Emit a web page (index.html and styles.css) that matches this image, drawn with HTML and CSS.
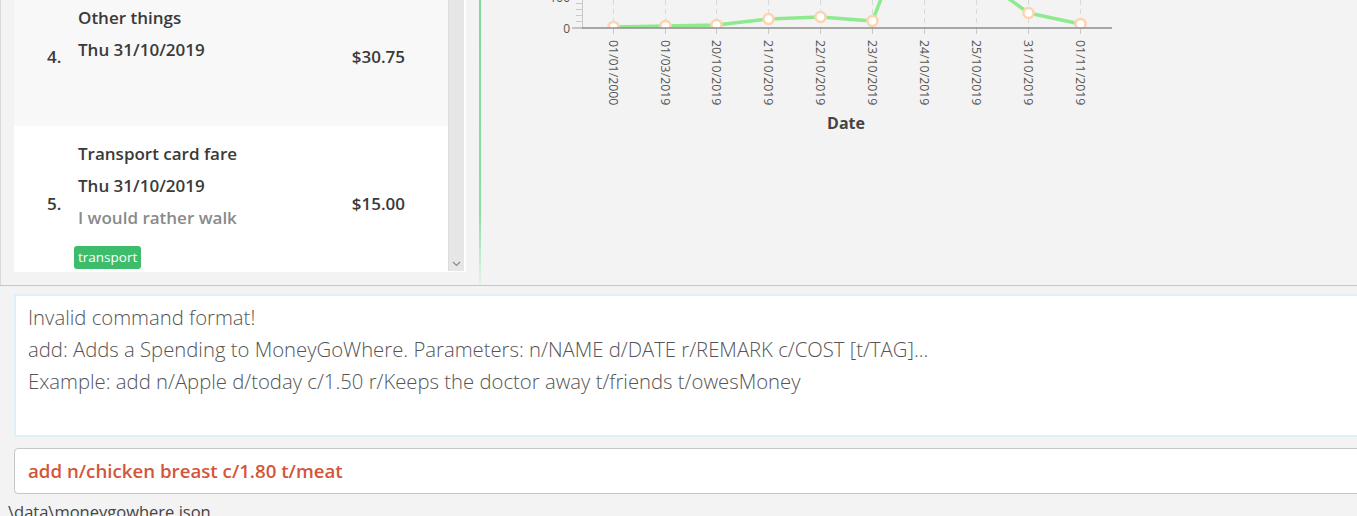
FILE: index.html
```html
<!DOCTYPE html>
<html>
<head>
<meta charset="utf-8">
<link rel="stylesheet" href="styles.css">
</head>
<body>
<div class="app">
  <div class="top">
    <div class="list-panel">
      <div class="list-view">
        <div class="list-cells">
          <div class="cell cell-alt cell-first">
            <div class="cell-index">4.</div>
            <div class="cell-body">
              <div class="cell-line">Other things</div>
              <div class="cell-line">Thu 31/10/2019</div>
            </div>
            <div class="cell-cost">$30.75</div>
          </div>
          <div class="cell cell-tall">
            <div class="cell-index">5.</div>
            <div class="cell-body">
              <div class="cell-line">Transport card fare</div>
              <div class="cell-line">Thu 31/10/2019</div>
              <div class="cell-line cell-remark">I would rather walk</div>
              <div class="tags"><span class="tag">transport</span></div>
            </div>
            <div class="cell-cost">$15.00</div>
          </div>
        </div>
        <div class="scrollbar">
          <svg class="scroll-arrow" width="9" height="6" viewBox="0 0 9 6"><path d="M1 1 L4.5 4.5 L8 1" fill="none" stroke="#8a8a8a" stroke-width="1.2"/></svg>
        </div>
      </div>
    </div>
    <div class="divider"></div>
    <div class="chart-pane">
      <svg class="chart" width="876" height="285" viewBox="481 0 876 285">
        <defs>
          <clipPath id="plot"><rect x="582" y="-200" width="530" height="228"/></clipPath>
        </defs>
        <g class="y-axis">
          <line x1="582.5" y1="0" x2="582.5" y2="28" stroke="#c9c9c9" stroke-width="1"/>
          <line x1="576" y1="3.5" x2="582" y2="3.5" stroke="#c9c9c9"/>
          <line x1="576" y1="9.5" x2="582" y2="9.5" stroke="#c9c9c9"/>
          <line x1="576" y1="15.5" x2="582" y2="15.5" stroke="#c9c9c9"/>
          <line x1="576" y1="21.5" x2="582" y2="21.5" stroke="#c9c9c9"/>
          <line x1="572" y1="28" x2="582" y2="28" stroke="#b5b5b5" stroke-width="1.5"/>
          <text class="axis-num" x="570" y="-3" text-anchor="end" dominant-baseline="central">100</text>
          <text class="axis-num" x="570" y="28" text-anchor="end" dominant-baseline="central">0</text>
        </g>
        <g class="grid" stroke="#d9d9d9" stroke-width="1" stroke-dasharray="5 4">
          <line x1="613.5" y1="0" x2="613.5" y2="28"/>
          <line x1="665.5" y1="0" x2="665.5" y2="28"/>
          <line x1="716.5" y1="0" x2="716.5" y2="28"/>
          <line x1="768.5" y1="0" x2="768.5" y2="28"/>
          <line x1="820.5" y1="0" x2="820.5" y2="28"/>
          <line x1="872.5" y1="0" x2="872.5" y2="28"/>
          <line x1="924.5" y1="0" x2="924.5" y2="28"/>
          <line x1="976.5" y1="0" x2="976.5" y2="28"/>
          <line x1="1028.5" y1="0" x2="1028.5" y2="28"/>
          <line x1="1080.5" y1="0" x2="1080.5" y2="28"/>
        </g>
        <g class="ticks" stroke="#c9c9c9" stroke-width="1">
          <line x1="613.5" y1="28" x2="613.5" y2="34"/>
          <line x1="665.5" y1="28" x2="665.5" y2="34"/>
          <line x1="716.5" y1="28" x2="716.5" y2="34"/>
          <line x1="768.5" y1="28" x2="768.5" y2="34"/>
          <line x1="820.5" y1="28" x2="820.5" y2="34"/>
          <line x1="872.5" y1="28" x2="872.5" y2="34"/>
          <line x1="924.5" y1="28" x2="924.5" y2="34"/>
          <line x1="976.5" y1="28" x2="976.5" y2="34"/>
          <line x1="1028.5" y1="28" x2="1028.5" y2="34"/>
          <line x1="1080.5" y1="28" x2="1080.5" y2="34"/>
        </g>
        <g clip-path="url(#plot)">
          <polyline points="613.5,27 665.5,26 716.5,25 768.5,19 820.5,17 872.5,21 924.5,-115 976.5,-24.5 1028.5,13 1080.5,24" fill="none" stroke="#8fea8f" stroke-width="3.5" stroke-linejoin="round"/>
          <g fill="#ffffff" stroke="#fdd3b0" stroke-width="2.5">
            <circle cx="613.5" cy="27" r="5"/>
            <circle cx="665.5" cy="26" r="5"/>
            <circle cx="716.5" cy="25" r="5"/>
            <circle cx="768.5" cy="19" r="5"/>
            <circle cx="820.5" cy="17" r="5"/>
            <circle cx="872.5" cy="21" r="5"/>
            <circle cx="1028.5" cy="13" r="5"/>
            <circle cx="1080.5" cy="24" r="5"/>
          </g>
        </g>
        <line x1="582" y1="28" x2="1112" y2="28" stroke="#8c8c8c" stroke-width="1.6"/>
        <g class="dates">
          <text transform="translate(613.5 40) rotate(90)" dominant-baseline="central">01/01/2000</text>
          <text transform="translate(665.5 40) rotate(90)" dominant-baseline="central">01/03/2019</text>
          <text transform="translate(716.5 40) rotate(90)" dominant-baseline="central">20/10/2019</text>
          <text transform="translate(768.5 40) rotate(90)" dominant-baseline="central">21/10/2019</text>
          <text transform="translate(820.5 40) rotate(90)" dominant-baseline="central">22/10/2019</text>
          <text transform="translate(872.5 40) rotate(90)" dominant-baseline="central">23/10/2019</text>
          <text transform="translate(924.5 40) rotate(90)" dominant-baseline="central">24/10/2019</text>
          <text transform="translate(976.5 40) rotate(90)" dominant-baseline="central">25/10/2019</text>
          <text transform="translate(1028.5 40) rotate(90)" dominant-baseline="central">31/10/2019</text>
          <text transform="translate(1080.5 40) rotate(90)" dominant-baseline="central">01/11/2019</text>
        </g>
        <text class="axis-title" x="846" y="123" text-anchor="middle" dominant-baseline="central">Date</text>
      </svg>
    </div>
  </div>
  <div class="bottom">
    <div class="result-box">
      <div class="result-line">Invalid command format!</div>
      <div class="result-line">add: Adds a Spending to MoneyGoWhere. Parameters: n/NAME d/DATE r/REMARK c/COST [t/TAG]...</div>
      <div class="result-line">Example: add n/Apple d/today c/1.50 r/Keeps the doctor away t/friends t/owesMoney</div>
    </div>
    <div class="command-box">add n/chicken breast c/1.80 t/meat</div>
    <div class="status">\data\moneygowhere.json</div>
  </div>
</div>
</body>
</html>
```

FILE: styles.css
```css
html, body {
  margin: 0;
  padding: 0;
  background: #f3f3f3;
}

.app {
  width: 1357px;
  height: 516px;
  overflow: hidden;
  background: #f3f3f3;
  font-family: "Open Sans", "Noto Sans", sans-serif;
  color: #3a3a3a;
}

.top {
  display: flex;
  height: 285px;
  border-bottom: 1px solid #c6c6c6;
}

.list-panel {
  width: 466px;
  flex: none;
  box-sizing: border-box;
  border-left: 1px solid #dadada;
  padding-left: 13px;
}

.list-view {
  display: flex;
  height: 271px;
  border-right: 2px solid #ffffff;
  border-bottom: 1px solid #ffffff;
  overflow: hidden;
}

.list-cells {
  width: 434px;
  flex: none;
  overflow: hidden;
  background: #ffffff;
}

.cell {
  display: flex;
  align-items: center;
  box-sizing: border-box;
  background: #ffffff;
}

.cell-alt {
  background: #f8f8f8;
}

.cell-first {
  margin-top: -9px;
  height: 135px;
  padding-top: 11px;
  align-items: flex-start;
}

.cell-first .cell-index,
.cell-first .cell-cost {
  align-self: center;
  margin-bottom: 16px;
}

.cell-tall {
  height: 154px;
  align-items: center;
}

.cell-index {
  width: 31px;
  padding-left: 33px;
  flex: none;
  font-weight: 600;
  font-size: 17px;
}

.cell-body {
  flex: 1;
  display: flex;
  flex-direction: column;
}

.cell-line {
  height: 32px;
  line-height: 32px;
  font-size: 17px;
  font-weight: 600;
  white-space: nowrap;
}

.cell-remark {
  color: #8a8a8a;
}

.tags {
  display: flex;
  margin-top: 12px;
  margin-left: -4px;
}

.tag {
  background: #3dbd6c;
  color: #ffffff;
  font-size: 13.5px;
  line-height: 23px;
  padding: 0 4px;
  border-radius: 3px;
}

.cell-cost {
  flex: none;
  padding-right: 43px;
  font-size: 17px;
  font-weight: 600;
}

.scrollbar {
  width: 16px;
  flex: none;
  background: #e6e6e6;
  border-left: 1px solid #dcdcdc;
  box-sizing: border-box;
  display: flex;
  flex-direction: column;
  justify-content: flex-end;
  align-items: center;
  padding-bottom: 4px;
}

.divider {
  width: 2px;
  margin-left: 13px;
  flex: none;
  background: linear-gradient(to bottom, #7fd99a 0%, #8bdda4 75%, #e3f5e8 100%);
}

.chart-pane {
  flex: 1;
  overflow: hidden;
}

.chart {
  display: block;
}

.axis-num {
  font-family: "Open Sans", sans-serif;
  font-size: 12px;
  fill: #555555;
}

.dates text {
  font-family: "Open Sans", sans-serif;
  font-size: 12.3px;
  fill: #555555;
}

.axis-title {
  font-family: "Open Sans", sans-serif;
  font-size: 16px;
  font-weight: 700;
  fill: #444444;
}

.bottom {
  padding-left: 14px;
  padding-top: 8px;
}

.result-box {
  width: 1400px;
  height: 143px;
  box-sizing: border-box;
  border: 2px solid #ddeff8;
  background: #ffffff;
  padding: 5px 12px;
}

.result-line {
  font-size: 20.3px;
  font-weight: 300;
  line-height: 32px;
  color: #555555;
  white-space: nowrap;
}

.command-box {
  margin-top: 11px;
  width: 1400px;
  height: 46px;
  box-sizing: border-box;
  border: 1px solid #c6c6c6;
  border-radius: 4px;
  background: #ffffff;
  padding-left: 13px;
  line-height: 44px;
  font-size: 18.7px;
  font-weight: 600;
  color: #d4553a;
}

.status {
  margin-top: 8px;
  margin-left: -6px;
  font-size: 16.5px;
  line-height: 20px;
  color: #444444;
}
```
